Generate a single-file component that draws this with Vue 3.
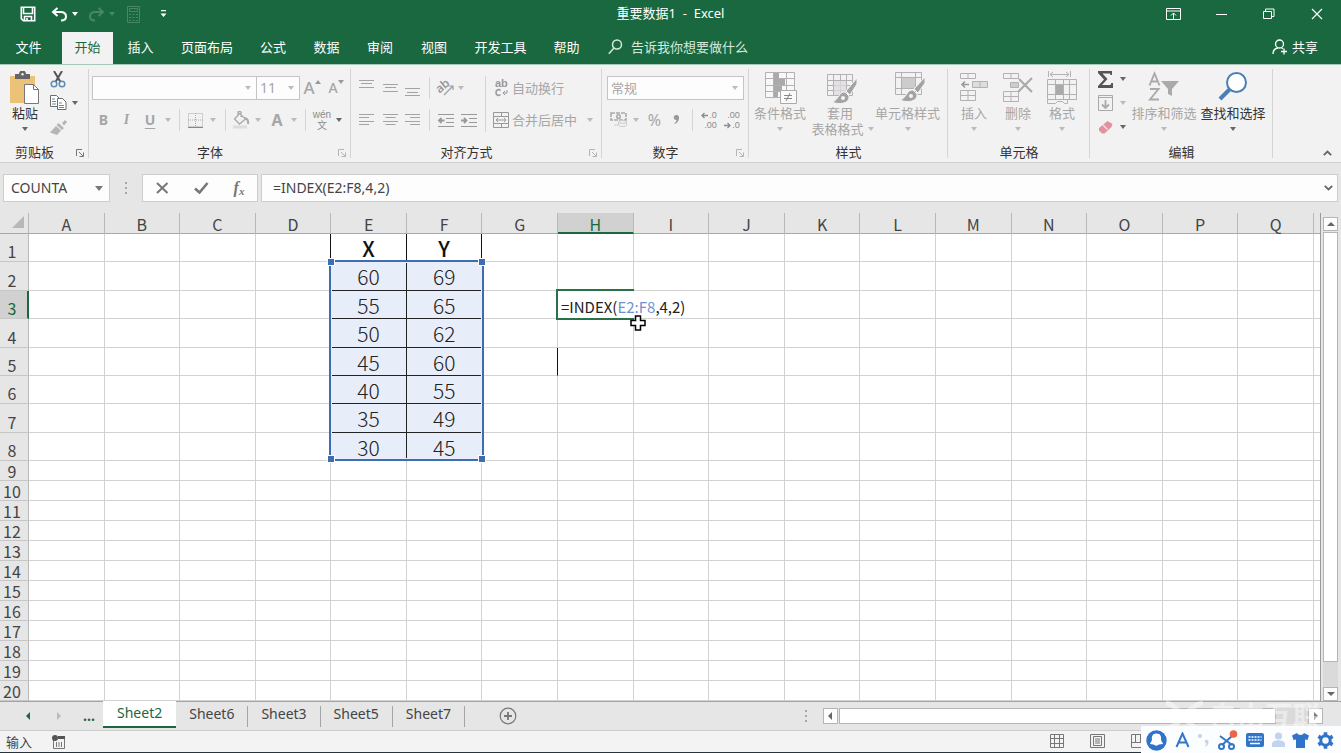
<script setup>
import { ref } from 'vue'

const tabs = ['文件', '开始', '插入', '页面布局', '公式', '数据', '审阅', '视图', '开发工具', '帮助']
const activeTab = ref('开始')

const columns = 'ABCDEFGHIJKLMNOPQ'.split('')
const values = {
  1: ['X', 'Y'], 2: [60, 69], 3: [55, 65], 4: [50, 62],
  5: [45, 60], 6: [40, 55], 7: [35, 49], 8: [30, 45],
}
const rows = Array.from({ length: 20 }, (_, i) => i + 1)
const sheets = ['Sheet2', 'Sheet6', 'Sheet3', 'Sheet5', 'Sheet7']
const activeSheet = ref('Sheet2')

const nameBox = ref('COUNTA')
const formula = ref('=INDEX(E2:F8,4,2)')
const fontName = ref('')
const fontSize = ref('11')

function rowClass(r) {
  if (r > 8) return 'short'
  return [2, 4, 7].includes(r) ? 'tall plus' : 'tall'
}
function cellText(c, r) {
  if (!values[r]) return ''
  if (c === 'E') return values[r][0]
  if (c === 'F') return values[r][1]
  return ''
}
function cellClass(c, r) {
  const data = (c === 'E' || c === 'F') && r <= 8
  return {
    title: data && r === 1,
    data: data && r > 1,
    ink: (r === 1 && c === 'D') || (r === 5 && c === 'G'),
    anchor: (c === 'E' && r === 2) || (c === 'H' && r === 3),
    editing: c === 'H' && r === 3,
  }
}
</script>

<template>
  <div class="app">
    <header class="top">
      <div class="titlebar">
        <div class="qat">
          <button aria-label="保存">
            <svg width="16" height="16" viewBox="0 0 16 16" fill="none" stroke="#fff" stroke-width="1.6"><path d="M1.3 1.3h13.4v13.4H3.4L1.300 12.700z" /><path d="M3.500 1.500v6h9v-6M4.500 14.500v-4h7v4M7 12v2.500" /></svg>
          </button>
          <button aria-label="撤消">
            <svg width="17" height="15" viewBox="0 0 17 15" fill="none" stroke="#fff" stroke-width="2"><path d="M6.500 1L2 5l4.500 4M2 5h7.500c3.500 0 5.500 2 5.500 4.500S13 13.500 10 13.500" /></svg>
          </button>
          <i class="caret light"></i>
          <button aria-label="恢复" class="dim">
            <svg width="17" height="15" viewBox="0 0 17 15" fill="none" stroke="#fff" stroke-width="2"><path d="M10.500 1L15 5l-4.500 4M15 5H7.500C4 5 2 7 2 9.500S4 13.500 7 13.500" /></svg>
          </button>
          <i class="caret light dim"></i>
          <button aria-label="计算器" class="dim">
            <svg width="13" height="17" viewBox="0 0 13 17" fill="none" stroke="#fff"><path d="M.5.5h12v16H.5zM2.500 2.500h8v3h-8zM2 8.500h2m1.500 0h2m1.500 0h2M2 11.500h2m1.500 0h2m1.500 0h2M2 14.500h2m1.500 0h2m1.500 0h2" /></svg>
          </button>
          <button aria-label="自定义">
            <svg width="7" height="8" viewBox="0 0 7 8" fill="#fff"><path d="M1 0h5v1.300H1zM.5 3.500h6L3.500 7z" /></svg>
          </button>
        </div>
        <h1>重要数据1&nbsp; -&nbsp; Excel</h1>
        <div class="window">
          <button aria-label="功能区显示选项"><svg width="15" height="13" viewBox="0 0 15 13" fill="none" stroke="#fff"><path d="M.5.5h14v11H.5zM.5 3h14M7.500 11V5M5 7.500L7.500 5 10 7.500" /></svg></button>
          <button aria-label="最小化"><svg width="11" height="13" viewBox="0 0 11 13" stroke="#fff"><path d="M0 6.500h11" /></svg></button>
          <button aria-label="还原"><svg width="12" height="12" viewBox="0 0 12 12" fill="none" stroke="#fff"><path d="M.5 3.500h8v7h-8zM2.500 3V1h8.500v7.500H9" /></svg></button>
          <button aria-label="关闭"><svg width="12" height="12" viewBox="0 0 12 12" stroke="#fff" stroke-width="1.200"><path d="M1 1l10 10M11 1L1 11" /></svg></button>
        </div>
      </div>
      <div class="tabbar">
        <nav>
          <button v-for="t in tabs" :key="t" :class="{ on: t === activeTab }" @click="activeTab = t">{{ t }}</button>
        </nav>
        <button class="tell">
          <svg width="15" height="16" viewBox="0 0 15 16" fill="none" stroke="#d5e8dc" stroke-width="1.500"><circle cx="9" cy="5.500" r="4.500" /><path d="M6 9L.8 14.800" /></svg>
          <span>告诉我你想要做什么</span>
        </button>
        <button class="share">
          <svg width="16" height="16" viewBox="0 0 16 16" fill="none" stroke="#fff" stroke-width="1.300"><circle cx="7.500" cy="5" r="4" /><path d="M1 15c0-3.500 2-5.500 5-6M9.500 9l1.500.8M12 9.500v6M9 12.500h6" /></svg>
          <span>共享</span>
        </button>
      </div>
    </header>

    <section class="ribbon">
      <div class="group clipboard">
        <div class="body big">
          <button class="large strong">
            <svg width="32" height="34" viewBox="0 0 32 34"><path d="M1 5h25v27H1z" fill="#ecc277" /><path d="M6 3h4a3.500 3.500 0 0 1 7 0h4v5H6z" fill="#666" /><circle cx="13.500" cy="3.200" r="1.200" fill="#f2f2f2" /><path d="M15.500 13.500h9l5 5v14h-14z" fill="#fff" stroke="#777" /><path d="M24.500 13.500v5h5" fill="none" stroke="#777" /></svg>
            <span>粘贴</span><i class="caret"></i>
          </button>
          <div class="stack">
            <button aria-label="剪切"><svg width="16" height="17" viewBox="0 0 16 17" fill="none"><path d="M4 0l6.500 11M12 0L5.500 11" stroke="#555" stroke-width="2" /><circle cx="4" cy="13" r="2.800" stroke="#5b8db8" stroke-width="1.500" /><circle cx="12" cy="13" r="2.800" stroke="#5b8db8" stroke-width="1.500" /></svg></button><i></i>
            <button aria-label="复制"><svg width="17" height="16" viewBox="0 0 17 16" fill="#fff" stroke="#6b6b6b"><path d="M.5.5h6l3 3v8h-9z" /><path d="M2 4h3M2 6.500h4M2 9h4" stroke="#5b8db8" /><path d="M7.500 3.500h5l3.500 3.500v7.500H7.500z" /><path d="M9 8h3M9 10.500h5M9 12.500h5" stroke="#5b8db8" /></svg></button><i class="caret"></i>
            <button aria-label="格式刷"><svg width="17" height="15" viewBox="0 0 17 15" fill="#b5b5b5"><path d="M12 3l3-3 2 2-3 3.500zM8.500 3l5.500 5-2 2L6.500 5zM6 6l5 4.500-4 4.500-7-2.500z" /></svg></button><i></i>
          </div>
        </div>
        <div class="caption launch"><span>剪贴板</span><button aria-label="剪贴板选项" class="launcher strong"><svg width="8" height="8" viewBox="0 0 8 8" fill="none" stroke="currentColor"><path d="M.5 7V.5H6M3 3l4 4M7.500 3.500v4h-4" /></svg></button></div>
      </div>

      <div class="group font">
        <div class="body lines">
          <div class="row r1">
            <label class="combo"><input v-model="fontName" aria-label="字体" /><i class="caret faint"></i></label>
            <label class="combo size"><input v-model="fontSize" aria-label="字号" /><i class="caret faint"></i></label>
            <button class="grow">A<svg width="6" height="4" viewBox="0 0 6 4"><path d="M0 4l3-4 3 4z" fill="#999" /></svg></button>
            <button class="grow less">A<svg width="6" height="4" viewBox="0 0 6 4"><path d="M0 0l3 4 3-4z" fill="#999" /></svg></button>
          </div>
          <div class="row r2">
            <button class="bold">B</button><button class="italic">I</button><button class="under">U</button><i class="caret faint"></i><i class="sep"></i>
            <button aria-label="边框"><svg width="15" height="15" viewBox="0 0 15 15" fill="none" stroke="#aaa"><path d="M.5.5h14v13H.5zM7.500 0v14M0 7h15" stroke-dasharray="1 1" /><path d="M0 14.500h15" stroke="#888" /></svg></button><i class="caret faint"></i><i class="sep"></i>
            <button aria-label="填充颜色"><svg width="17" height="18" viewBox="0 0 17 18" fill="none" stroke="#aaa" stroke-width="1.300"><path d="M6.500 2.500l6 5.500-6 5L1.500 8zM5 5V1.500C5 0 8 0 8 1.500V6" /><path d="M12 7c3 1 3.500 3 3 6" stroke-width="2" /><path d="M0 16h14" stroke="#ddd" stroke-width="3" /></svg></button><i class="caret faint"></i>
            <button class="bold color">A</button><i class="caret faint"></i><i class="sep"></i>
            <button class="pinyin"><span>wén</span><span>文</span></button><i class="caret"></i>
          </div>
        </div>
        <div class="caption launch"><span>字体</span><button aria-label="字体选项" class="launcher"><svg width="8" height="8" viewBox="0 0 8 8" fill="none" stroke="currentColor"><path d="M.5 7V.5H6M3 3l4 4M7.500 3.500v4h-4" /></svg></button></div>
      </div>

      <div class="group align">
        <div class="body split">
          <div class="lines">
            <div class="row a1">
              <button aria-label="顶端对齐"><svg width="16" height="20" viewBox="0 0 16 20" stroke="#a3a3a3"><path d="M0 2.500h15M2 5.500h11M0 9.500h15" /></svg></button>
              <button aria-label="垂直居中"><svg width="16" height="20" viewBox="0 0 16 20" stroke="#a3a3a3"><path d="M0 6.500h15M2 9.500h11M0 13.500h15" /></svg></button>
              <button aria-label="底端对齐"><svg width="16" height="20" viewBox="0 0 16 20" stroke="#a3a3a3"><path d="M0 10.500h15M2 14.500h11M0 17.500h15" /></svg></button>
              <i class="sep"></i>
              <button aria-label="方向"><svg class="loose" width="18" height="16" viewBox="0 0 18 16" fill="none" stroke="#9c9c9c"><text x="0" y="11" font-size="12" font-weight="600" font-family="Noto Sans" fill="#999" stroke="none" transform="rotate(-40 5 9)">ab</text><path d="M7 15l9-9M12 6h4v4" stroke-width="1.200" /></svg></button>
              <i class="caret faint start"></i>
            </div>
            <div class="row a1">
              <button aria-label="左对齐"><svg width="16" height="14" viewBox="0 0 16 14" stroke="#a3a3a3"><path d="M0 1.500h15M0 4.500h10M0 8.500h15M0 11.500h10" /></svg></button>
              <button aria-label="居中"><svg width="16" height="14" viewBox="0 0 16 14" stroke="#a3a3a3"><path d="M0 1.500h15M2.500 4.500h10M0 8.500h15M2.500 11.500h10" /></svg></button>
              <button aria-label="右对齐"><svg width="16" height="14" viewBox="0 0 16 14" stroke="#a3a3a3"><path d="M0 1.500h15M5 4.500h10M0 8.500h15M5 11.500h10" /></svg></button>
              <i class="sep"></i>
              <button aria-label="减少缩进"><svg width="18" height="15" viewBox="0 0 18 15" stroke="#999" fill="none"><path d="M1 1.500h16M9 5.500h8M9 9.500h8M1 13.500h16" /><path d="M7.500 7.500H2M4.500 5L2 7.500 4.500 10" stroke-width="1.800" /></svg></button>
              <button aria-label="增加缩进"><svg width="18" height="15" viewBox="0 0 18 15" stroke="#999" fill="none"><path d="M1 1.500h16M9 5.500h8M9 9.500h8M1 13.500h16" /><path d="M1 7.500h5.500M4 5l2.500 2.500L4 10" stroke-width="1.800" /></svg></button>
            </div>
          </div>
          <i class="sep full"></i>
          <div class="lines wide">
            <button class="text"><svg class="loose" width="18" height="18" viewBox="0 0 18 18" fill="none" stroke="#999"><text x="3" y="8" font-size="11" font-weight="700" font-family="Liberation Sans" fill="#999" stroke="none">ab</text><path d="M8.500 11.500c-1.500-1.500-4.500-1-4.500 2s3 3.500 4.500 2" stroke-width="1.600" /><path d="M15 11v3h-4M13 12l-2 2 2 2" /></svg><span>自动换行</span></button>
            <button class="text"><svg width="18" height="17" viewBox="0 0 18 17" fill="none" stroke="#999"><path d="M1.500.500h15v15h-15zM1.500 4.500h15M1.500 11.500h15M9.500 0v4M9.500 12v4M4 8h10M6 6L4 8l2 2M12 6l2 2-2 2" /></svg><span>合并后居中</span><i class="caret faint"></i></button>
          </div>
        </div>
        <div class="caption launch"><span>对齐方式</span><button aria-label="对齐选项" class="launcher"><svg width="8" height="8" viewBox="0 0 8 8" fill="none" stroke="currentColor"><path d="M.5 7V.5H6M3 3l4 4M7.500 3.500v4h-4" /></svg></button></div>
      </div>

      <div class="group number">
        <div class="body lines">
          <label class="combo format"><select aria-label="数字格式"><option>常规</option></select><i class="caret faint"></i></label>
          <div class="row n2">
            <button aria-label="会计数字格式"><svg width="18" height="16" viewBox="0 0 18 16" fill="none" stroke="#aaa"><path d="M1 1h15v7H1z" stroke-width="1.600" stroke-dasharray="4 1" /><circle cx="8.500" cy="4.500" r="1.800" stroke-width="1.500" /><ellipse cx="12.500" cy="10" rx="4" ry="1.500" fill="#eee" stroke="#ccc" /><path d="M8.500 10v3c0 2 8 2 8 0v-3M4 13h4" stroke="#ccc" /></svg></button><i class="caret faint"></i>
            <button class="percent">%</button><button class="comma" aria-label="千位分隔"><svg width="7" height="10" viewBox="0 0 7 10" fill="#999"><path d="M3 0a2.500 2.500 0 0 1 3 3c0 3-2 5-4 6l-.5-1C3 7 3.500 6 3.500 5A2.500 2.500 0 0 1 3 0z" /></svg></button><i class="sep"></i>
            <button class="dec"><span><svg width="7" height="7" viewBox="0 0 7 7" fill="none" stroke="#8c8c8c" stroke-width="1.300"><path d="M7 3.500H1M3.500 1L1 3.500 3.500 6" /></svg>.0</span><span>.00</span></button>
            <button class="dec"><span>.00</span><span><svg width="7" height="7" viewBox="0 0 7 7" fill="none" stroke="#8c8c8c" stroke-width="1.300"><path d="M0 3.500h6M3.500 1L6 3.500 3.500 6" /></svg>.0</span></button>
          </div>
        </div>
        <div class="caption launch"><span>数字</span><button aria-label="数字选项" class="launcher"><svg width="8" height="8" viewBox="0 0 8 8" fill="none" stroke="currentColor"><path d="M.5 7V.5H6M3 3l4 4M7.500 3.500v4h-4" /></svg></button></div>
      </div>

      <div class="group styles">
        <div class="body big">
          <button class="large">
            <svg width="34" height="34" viewBox="0 0 34 34" fill="none" stroke="#b5b0b5"><path d="M2.500 1.500h29v25h-29zM2.500 7.500h29M2.500 14.500h29M2.500 20.500h29M10.500 1v25M23.500 1v25" fill="#f8f8f8" /><path d="M11 2h5v6h-5zM11 8h11v6H11zM11 15h8v5h-8zM11 21h4v5h-4z" fill="#aaa" stroke="none" /><path d="M17.500 19.500h16v13h-16z" fill="#fafafa" stroke="#aaa" /><path d="M21 24.500h8M21 27.500h8M27 22l-4 8" stroke="#888" /></svg>
            <span>条件格式</span><i class="caret faint"></i>
          </button>
          <button class="large">
            <svg width="34" height="34" viewBox="0 0 34 34" fill="none" stroke="#b5b0b5"><path d="M4.500 3.500h25v21h-25zM4.500 9.500h25M4.500 14.500h25M4.500 19.500h25M10.500 3v21M17.500 3v21M23.500 3v21" /><path d="M11 10h12v14H11z" fill="#ddd" fill-opacity=".8" stroke="none" /><path d="M34 7L23 20l4 4 7-11z" fill="#a3a3a3" stroke="#f4f4f4" /><path d="M22 21c-6-1-6 8-13 10 7 3 18 2 17-6z" fill="#a3a3a3" stroke="#f4f4f4" /><circle cx="20" cy="27" r="2" fill="#f4f4f4" stroke="none" /></svg>
            <span>套用</span><span class="second">表格格式<i class="caret faint"></i></span>
          </button>
          <button class="large wide">
            <svg width="34" height="34" viewBox="0 0 34 34" fill="none" stroke="#b5b0b5"><path d="M4.500 1.500h26v22h-26zM4.500 6.500h26M4.500 17.500h26M10.500 1v22M24.500 1v22" /><path d="M11 7h13v10H11z" fill="#ccc" stroke="none" /><path d="M34 6L23 18l4 4 7-10z" fill="#a3a3a3" stroke="#f4f4f4" /><path d="M22 19c-6-1-6 8-13 10 7 3 18 2 17-6z" fill="#a3a3a3" stroke="#f4f4f4" /><circle cx="20" cy="25" r="2" fill="#f4f4f4" stroke="none" /></svg>
            <span>单元格样式</span><i class="caret faint"></i>
          </button>
        </div>
        <div class="caption"><span>样式</span></div>
      </div>

      <div class="group cells">
        <div class="body big">
          <button class="large">
            <svg width="30" height="34" viewBox="0 0 30 34" fill="none" stroke="#b5b0b5"><path d="M1.500 2.500h15v5h-15zM9 2v5M1.500 19.500h15v10h-15zM9 19v10M1.500 24.500h15" /><path d="M13.500 10.500h15v6h-15zM21 10v6" fill="#ddd" /><path d="M10 13.500H3M6 10.500l-3 3 3 3" stroke="#999" stroke-width="1.600" /></svg>
            <span>插入</span><i class="caret faint"></i>
          </button>
          <button class="large">
            <svg width="32" height="34" viewBox="0 0 32 34" fill="none" stroke="#b5b0b5"><path d="M1.500 2.500h15v5h-15zM9 2v5M1.500 20.500h15v10h-15zM9 20v10M1.500 25.500h15" /><path d="M8.500 11.500h8v5h-8z" fill="#ccc" /><path d="M17 8l13 13M30 7L16 21" stroke="#aaa" stroke-width="2.200" /></svg>
            <span>删除</span><i class="caret faint"></i>
          </button>
          <button class="large">
            <svg width="30" height="34" viewBox="0 0 30 34" fill="none" stroke="#b5b0b5"><path d="M1.500 0v6M23.500 0v6M3 3.500h19M6 1L3 3.500 6 6M19 1l3 2.500L19 6M.5 8.500h29v20H.5zM.5 13.500h29M.5 23.500h29M8.500 8v20M16.500 8v20M22.500 8v20" /><path d="M9 14h7v10H9z" fill="#aaa" stroke="none" /><path d="M.5 28.500v4h8l2-2h5l2 2h3v-4" /></svg>
            <span>格式</span><i class="caret faint"></i>
          </button>
        </div>
        <div class="caption"><span>单元格</span></div>
      </div>

      <div class="group edit">
        <div class="body big">
          <div class="stack">
            <button aria-label="自动求和"><svg width="17" height="17" viewBox="0 0 17 17" fill="#555"><path d="M1 0h14v4h-1.500L13 2.500H5.500L10.500 8 5 14h8.500l.8-2H16v5H1v-2l6-6.500L1 2z" /></svg></button><i class="caret"></i>
            <button aria-label="填充"><svg width="16" height="17" viewBox="0 0 16 17" fill="none" stroke="#aaa"><path d="M.5.500h14v15H.5zM0 2.500h15" /><path d="M7.500 5v8M4 9.500L7.500 13 11 9.500" stroke-width="1.800" /></svg></button><i class="caret faint"></i>
            <button aria-label="清除"><svg width="14" height="14" viewBox="0 0 14 14"><path d="M8.500 1l5 3-1 3-7 6.500H3l-3-3V8z" fill="#e590a0" /><path d="M4 5l4.500 4.500" stroke="#f8e4e8" stroke-width="1.200" /></svg></button><i class="caret"></i>
          </div>
          <button class="large sort">
            <svg width="32" height="34" viewBox="0 0 32 34" fill="none" stroke="#aaa" stroke-width="1.900"><path d="M1.500 14.500L6.500 2.500l5 12M3.200 10.500h6.600M2 18h8.500L2 28.500h9" /><path d="M13 10h18l-7 8v7l-4-2v-5z" fill="#aaa" stroke="none" /></svg>
            <span>排序和筛选</span><i class="caret faint"></i>
          </button>
          <button class="large find strong">
            <svg width="32" height="34" viewBox="0 0 32 34" fill="none" stroke="#4a7fb5"><circle cx="19.500" cy="11.500" r="9.500" fill="#fff" stroke-width="2" /><path d="M12.500 18.500L3 28" stroke-width="4" /></svg>
            <span>查找和选择</span><i class="caret"></i>
          </button>
        </div>
        <div class="caption"><span>编辑</span></div>
      </div>
      <button class="collapse" aria-label="折叠功能区"><svg width="9" height="6" viewBox="0 0 9 6" fill="none" stroke="#666" stroke-width="1.800"><path d="M.8 5.200L4.500 1.500l3.700 3.700" /></svg></button>
    </section>

    <section class="formulabar">
      <label class="box name"><input v-model="nameBox" aria-label="名称框" /><i class="caret down"></i></label>
      <svg class="grip" width="3" height="12" viewBox="0 0 3 12" fill="#aaa"><path d="M0 0h2v2H0zM0 5h2v2H0zM0 10h2v2H0z" /></svg>
      <div class="box actions">
        <button aria-label="取消"><svg width="13" height="12" viewBox="0 0 13 12" fill="none" stroke="#777" stroke-width="2"><path d="M1 1l10.500 10M11.500 1L1 11" /></svg></button>
        <button aria-label="输入"><svg width="15" height="12" viewBox="0 0 15 12" fill="none" stroke="#777" stroke-width="2.600"><path d="M1 6.500l4.500 4L13.500 1" /></svg></button>
        <button class="fx" aria-label="插入函数">f<sub>x</sub></button>
      </div>
      <label class="box formula"><input v-model="formula" aria-label="编辑栏" /><svg width="9" height="6" viewBox="0 0 9 6" fill="none" stroke="#666" stroke-width="1.800"><path d="M.8.8l3.700 3.700L8.200.8" /></svg></label>
    </section>

    <main class="work">
      <table>
        <colgroup><col class="c-head" /><col v-for="c in columns" :key="c" /><col class="c-rest" /></colgroup>
        <thead>
          <tr>
            <th class="corner"><svg width="12" height="12" viewBox="0 0 12 12"><path d="M12 0v12H0z" fill="#b8b8b8" /></svg></th>
            <th v-for="c in columns" :key="c" :class="{ hot: c === 'H' }">{{ c }}</th>
            <th></th>
          </tr>
        </thead>
        <tbody>
          <tr v-for="r in rows" :key="r" :class="rowClass(r)">
            <th :class="{ hot: r === 3 }">{{ r }}</th>
            <td v-for="c in columns" :key="c" :class="cellClass(c, r)">
              <template v-if="c === 'H' && r === 3">
                <div class="editor">=INDEX(<span>E2:F8</span>,4,2)</div>
                <svg class="pointer" width="16" height="16" viewBox="0 0 16 16"><path d="M5.500 1h5v4.500H15v5h-4.500V15h-5v-4.500H1v-5h4.500z" fill="#fff" stroke="#000" stroke-width="1.500" /></svg>
              </template>
              <template v-else>{{ cellText(c, r) }}</template>
              <div v-if="c === 'E' && r === 2" class="range"><i></i><i></i><i></i><i></i></div>
            </td>
            <td></td>
          </tr>
        </tbody>
      </table>
      <div class="vscroll">
        <button aria-label="向上"><i class="tri up"></i></button>
        <div class="thumb"></div>
        <div class="track"></div>
        <button aria-label="向下"><i class="tri dn"></i></button>
      </div>
    </main>

    <section class="sheets">
      <div class="navs">
        <button aria-label="上一张"><i class="tri lt green"></i></button>
        <button aria-label="下一张"><i class="tri rt pale"></i></button>
        <button class="more">...</button>
      </div>
      <div class="list">
        <button v-for="s in sheets" :key="s" :class="{ on: s === activeSheet }" @click="activeSheet = s">{{ s }}</button>
      </div>
      <button class="add" aria-label="新工作表"><svg width="18" height="18" viewBox="0 0 18 18" fill="none" stroke="#777"><circle cx="9" cy="9" r="7.800" stroke-width="1.200" /><path d="M9 5v8M5 9h8" stroke-width="1.800" /></svg></button>
      <div class="hscroll">
        <svg width="3" height="12" viewBox="0 0 3 12" fill="#aaa"><path d="M0 0h2v2H0zM0 5h2v2H0zM0 10h2v2H0z" /></svg>
        <div class="hbar">
          <button aria-label="向左"><i class="tri lt"></i></button>
          <div class="thumb"></div>
          <div class="track"></div>
          <button aria-label="向右"><i class="tri rt"></i></button>
        </div>
      </div>
      <div class="mark">
        <svg width="44" height="32" viewBox="0 0 44 32" fill="none" stroke="#fff" stroke-width="5"><path d="M3 3c12 0 22 26 34 26M40 3C26 4 16 28 3 29" /></svg>
        <span>自由互联</span>
      </div>
    </section>

    <footer class="status">
      <span>输入</span>
      <svg width="14" height="14" viewBox="0 0 14 14" fill="none" stroke="#777"><path d="M1.500 5v8.500h11v-11H6M4.500 7v5M7 7v5M9.500 7v5" /><path d="M6 2.500h7" stroke-width="3" stroke="#555" /><circle cx="3" cy="3" r="3" fill="#555" stroke="none" /></svg>
      <div class="views">
        <button aria-label="普通"><svg width="15" height="15" viewBox="0 0 15 15" fill="none" stroke="#777"><path d="M.5.500h13v13H.5zM.5 4.500h13M.5 9.500h13M4.500.500v13M9.500.500v13" /></svg></button>
        <button aria-label="页面布局"><svg width="16" height="15" viewBox="0 0 16 15" fill="none" stroke="#777"><path d="M.5.500h14v13H.5zM3.500 2.500h8v9h-8zM5 5h5M5 7h5M5 9h5" /></svg></button>
        <button aria-label="分页预览"><svg width="15" height="15" viewBox="0 0 15 15" fill="none" stroke="#777"><path d="M.5.500h13v13H.5zM4.500.500v8h5v-8M.5 8.500h13" /></svg></button>
      </div>
    </footer>

    <aside class="ime">
      <svg width="21" height="21" viewBox="0 0 21 21"><circle cx="10.500" cy="10.500" r="10.200" fill="#2f74c8" /><path d="M10.500 3.500c4 0 5 3 4.500 6 0 2 2 3 2 4.500l-4 .5c-1.500 1.500-4 1.500-5.500 0l-3.500-.5c0-1.500 2-2.500 2-4.500-.5-3 .5-6 4.500-6z" fill="#fff" /></svg>
      <svg width="15" height="16" viewBox="0 0 15 16" fill="none" stroke="#3277c8" stroke-width="2"><path d="M1.500 15L7.500 1.500 13.500 15M4 10.500h7" /></svg>
      <svg width="13" height="14" viewBox="0 0 13 14" fill="#c3d3ee"><circle cx="3" cy="3" r="2" /><path d="M8.500 7a2 2 0 0 1 3 2c0 2-1 3.500-3 4.500l-.5-1c1-.6 1.500-1.200 1.500-2A2 2 0 0 1 8.500 7z" /></svg>
      <svg width="20" height="21" viewBox="0 0 20 21" fill="none" stroke="#3277c8" stroke-width="2"><path d="M2 6l12 9M14 6L4 15" /><circle cx="3.500" cy="16.500" r="2.500" /><circle cx="13.500" cy="16.500" r="2.500" /><circle cx="15.500" cy="4" r="3.800" fill="#ec6549" stroke="none" /></svg>
      <svg width="18" height="14" viewBox="0 0 18 14"><rect width="18" height="14" rx="2" fill="#2f74c8" /><path d="M2.500 4h13M2.500 7h13" stroke="#fff" stroke-width="1.500" stroke-dasharray="2 1" /><path d="M4 10.500h10" stroke="#fff" stroke-width="1.500" /></svg>
      <svg width="13" height="16" viewBox="0 0 13 16" fill="#c3d3ee"><circle cx="6.500" cy="4" r="3.600" /><path d="M0 15v-3c0-5 13-5 13 0v3z" /></svg>
      <svg width="17" height="15" viewBox="0 0 17 15" fill="#2f74c8"><path d="M5 0c1 2.500 6 2.500 7 0l5 2.500-1.500 4.500-2.500-.5V15H4V6.500L1.500 7 0 2.500z" /></svg>
      <svg width="17" height="17" viewBox="0 0 17 17" fill="none" stroke="#2f74c8"><circle cx="8.500" cy="8.500" r="4.700" stroke-width="3" /><path d="M8.500.3v3M8.500 13.700v3M1.400 4.400L4 5.900M13 11.100l2.600 1.500M1.400 12.600L4 11.100M13 5.900l2.600-1.500" stroke-width="3.600" /></svg>
    </aside>
  </div>
</template>

<style>
body { margin: 0; }
</style>

<style scoped>
* { box-sizing: border-box; }
.app {
  position: relative;
  display: flex;
  flex-direction: column;
  min-height: 100vh;
  overflow: hidden;
  background: #e6e6e6;
  color: #444;
  font: 13px/16px "Noto Sans", "Noto Sans CJK SC", sans-serif;
}
button { border: 0; padding: 0; background: none; font: inherit; color: inherit; display: flex; align-items: center; justify-content: center; white-space: nowrap; }
input, select { border: 0; padding: 0; margin: 0; background: none; font: inherit; color: inherit; outline: 0; min-width: 0; appearance: none; flex: 1; }
svg { display: block; flex: none; }
.loose { overflow: visible; }
.caret { display: block; flex: none; width: 0; height: 0; border: 3px solid transparent; border-top: 4px solid #666; border-bottom: 0; }
.caret.light { border-top-color: #fff; }
.caret.faint { border-top-color: #bbb; }
.caret.down { border-width: 4px; border-top-width: 5px; border-bottom: 0; border-top-color: #777; }
.dim { opacity: .2; }

.top { background: #1a6840; color: #fff; }
.titlebar { display: grid; grid-template-columns: 1fr auto 1fr; height: 28px; align-items: center; }
h1 { margin: 0; font-size: 13px; font-weight: 400; line-height: 18px; padding-bottom: 2px; }
.qat { display: flex; align-items: center; padding-left: 20px; }
.qat button:nth-child(2) { margin-left: 15px; }
.qat .caret { margin-left: 4px; }
.qat button:nth-child(4) { margin-left: 10px; }
.qat button:nth-child(6) { margin-left: 12px; }
.qat button:nth-child(7) { margin-left: 20px; }
.window { display: flex; justify-content: flex-end; }
.window button { width: 48px; height: 26px; }
.tabbar { display: flex; align-items: stretch; height: 36px; padding-top: 4px; }
.tabbar button { padding-bottom: 2px; }
nav { display: grid; grid-template-columns: 62px 51px 55px 78px 54px 53px 54px 54px 79px 53px; }
nav button:first-child { padding-right: 5px; }
nav .on { background: #f3f2f2; color: #1a6840; }
.tell { gap: 8px; margin-left: 15px; color: #d5e8dc; }
.tabbar .share { gap: 4px; margin-left: auto; padding-right: 23px; }

.ribbon { display: flex; height: 99px; border-top: 1px solid #a9c9b8; border-bottom: 1px solid #cfcfcf; background: #f3f2f2; color: #a6a6a6; }
.group { display: flex; flex-direction: column; flex: none; position: relative; }
.group::after { content: ""; position: absolute; right: 0; top: 4px; bottom: 4px; width: 1px; background: #d5d5d5; }
.clipboard { width: 89px; }
.font { width: 262px; }
.align { width: 251px; }
.number { width: 147px; }
.styles { width: 199px; }
.cells { width: 142px; }
.edit { width: 183px; }
.body { flex: 1; }
.caption { display: flex; height: 21px; align-items: center; justify-content: center; color: #333; position: relative; }
.caption.launch { padding-right: 20px; }
.launcher { position: absolute; right: 5px; bottom: 5px; color: #b5b5b5; }
.launcher.strong { color: #777; }
.lines { display: flex; flex-direction: column; gap: 8px; }
.body.lines, .body.split { padding-top: 11px; }
.font .body { padding-left: 3px; }
.number .body { padding-left: 5px; padding-right: 5px; }
.row { display: grid; height: 24px; align-items: center; justify-items: center; }
.r1 { grid-template-columns: 165px 43px 24px 24px; }
.r2 { grid-template-columns: 23px 23px 24px 12px 10px 22px 14px 10px 22px 12px 26px 8px 14px 20px 14px; }
.a1 { grid-template-columns: 24px 23px 22px 10px 24px 22px; }
.n2 { grid-template-columns: 23px 12px 25px 19px 12px 22px 24px; }
.sep { width: 1px; height: 22px; background: #d5d5d5; }
.sep.full { height: 56px; margin-left: 5px; }
.combo { display: flex; align-items: center; width: 100%; height: 24px; padding: 0 5px 0 3px; border: 1px solid #c4c4c4; background: #fdfdfd; }
.combo input, .combo select { width: 100%; }
.combo.size { border-left: 0; font-size: 14px; }
.grow { font-size: 17px; align-items: flex-start; font-weight: 500; }
.less { font-size: 14px; }
.bold { font-weight: 700; font-size: 14px; }
.color { font-size: 16px; }
.italic { font: italic 700 14px/16px "Liberation Serif", serif; }
.under { font-weight: 700; font-size: 14px; text-decoration: underline; text-underline-offset: 3px; }
.pinyin { flex-direction: column; font: 10px/11px "Liberation Sans", "Noto Sans CJK SC", sans-serif; color: #8c8c8c; }
.start { justify-self: start; }
.split { display: flex; padding-left: 4px; }
.wide.lines { padding-left: 6px; }
.text { height: 24px; justify-content: flex-start; gap: 2px; }
.text .caret { margin-left: 8px; }
.percent { font-size: 16px; }
.dec { flex-direction: column; font: 9px/10px "Liberation Sans", sans-serif; align-items: flex-end; color: #8c8c8c; }
.dec span { display: flex; align-items: center; gap: 1px; }
.big { display: flex; padding-top: 6px; }
.large { flex-direction: column; justify-content: flex-start; align-self: flex-start; }
.large > span { height: 16px; line-height: 16px; }
.large > .caret { margin-top: 6px; }
.large.strong { color: #333; }
.second { display: flex; align-items: center; gap: 4px; padding-left: 5px; }
.clipboard .body { padding-left: 4px; }
.clipboard .large { width: 42px; }
.stack { display: grid; grid-template-rows: 24px 24px 24px; align-items: center; justify-items: center; margin-top: -4px; }
.clipboard .stack { grid-template-columns: 24px 10px; }
.styles .body { padding-left: 1px; }
.styles .large { width: 60px; }
.styles .large.wide { width: 75px; }
.cells .body { padding-left: 4px; }
.cells .large { width: 44px; }
.edit .body { padding-left: 4px; }
.edit .stack { grid-template-columns: 23px 11px; }
.edit .sort { width: 72px; }
.edit .find { width: 66px; }
.collapse { margin-left: auto; align-self: flex-end; padding: 0 9px 6px; }

.formulabar { display: flex; align-items: center; height: 50px; padding: 0 3px; color: #444; font-size: 14px; }
.box { display: flex; align-items: center; height: 28px; border: 1px solid #cdcdcd; background: #fdfdfd; }
.name { width: 107px; padding: 0 6px 0 7px; }
.grip { margin: 0 14px 0 15px; }
.actions { width: 116px; justify-content: space-around; padding: 0; }
.fx { font: italic 700 16px/16px "Liberation Serif", serif; color: #777; }
.fx sub { font-size: 11px; line-height: 8px; padding-top: 6px; }
.formula { flex: 1; margin-left: 3px; padding: 0 4px 0 11px; }

.work { display: flex; border-bottom: 1px solid #a5a5a5; }
table { flex: 1; width: 100%; min-width: 0; table-layout: fixed; border-collapse: separate; border-spacing: 0; font-family: "Noto Sans CJK SC", sans-serif; border-right: 1px solid #999; }
.c-head { width: 29px; }
.c-rest { width: 6px; }
th, td { padding: 0; overflow: visible; white-space: nowrap; border: 0 solid #d2d2d2; border-right-width: 1px; border-bottom-width: 1px; }
td { background: #fff; text-align: center; font-size: 21px; font-weight: 300; line-height: 24px; color: #222; }
th { background: #e6e6e6; font-size: 16px; font-weight: 400; line-height: 18px; border-right-color: #b9b9b9; vertical-align: bottom; }
thead th { height: 21px; border-bottom-color: #a8a8a8; line-height: 16px; padding-bottom: 1px; }
thead th:last-child { border-right: 0; }
td:last-child { border-right: 0; }
.corner svg { margin: 0 4px 4px auto; }
tbody th { padding-right: 4px; border-bottom-color: #c6c6c6; }
.tall { height: 28px; }
.tall.plus { height: 29px; }
.tall th { padding-bottom: 1px; }
.short { height: 20px; }
.short td { line-height: 18px; }
.hot { background: #d1d1d1; color: #1a6840; }
thead .hot { border-bottom: 2px solid #1a6840; padding-bottom: 0; }
tbody .hot { border-right: 2px solid #1a6840; padding-right: 3px; }
.title { color: #111; font-weight: 500; border-right-color: #111; }
.data { background: #e8eef9; border-color: #222; }
.ink { border-right-color: #111; }
.anchor { position: relative; }
.range { position: absolute; z-index: 1; left: -2px; top: -2px; width: calc(200% + 6px); height: 201px; border: 2px solid #3f6db2; box-shadow: inset 0 0 0 1px #e8eef9; }
.range i { position: absolute; width: 6px; height: 6px; background: #3f6db2; outline: 1px solid #fff; }
.range i:nth-child(1) { left: -3px; top: -3px; }
.range i:nth-child(2) { right: -3px; top: -3px; }
.range i:nth-child(3) { left: -3px; bottom: -3px; }
.range i:nth-child(4) { right: -3px; bottom: -3px; }
.editing { border-right-color: #fff; }
.editor { position: absolute; z-index: 1; left: -2px; right: -1px; top: -2px; bottom: -2px; border: 2px solid #2a7049; border-right: 0; padding: 4px 0 0 3px; text-align: left; font-size: 15px; font-weight: 400; line-height: 24px; }
.editor span { color: #6f93cf; }
.pointer { position: absolute; z-index: 2; right: -13px; bottom: -13px; }

.vscroll { display: flex; flex-direction: column; flex: none; width: 20px; padding: 4px 3px 0 2px; }
.vscroll button, .hbar button { flex: none; width: 15px; height: 14px; border: 1px solid #b5b5b5; background: #fdfdfd; }
.vscroll .thumb { flex: 430; margin-top: 1px; border: 1px solid #b5b5b5; background: #fff; }
.vscroll .track { flex: 25; background: #dadada; }
.tri { display: block; width: 0; height: 0; border: 4px solid transparent; }
.tri.up { border-top: 0; border-bottom-color: #666; }
.tri.dn { border-bottom: 0; border-top-color: #666; }
.tri.lt { border-left: 0; border-right-color: #666; }
.tri.rt { border-right: 0; border-left-color: #777; }
.tri.green { border-right-color: #1a6840; }
.tri.pale { border-left-color: #bbb; }

.sheets { position: relative; display: flex; height: 29px; border-bottom: 1px solid #cdcdcd; font-size: 14px; line-height: 18px; }
.navs { display: grid; grid-template-columns: 28px 34px 26px; width: 103px; padding-left: 14px; flex: none; }
.more { color: #1a6840; font-weight: 700; }
.list { display: flex; }
.list button { height: 25px; padding: 0 14px 2px 13px; position: relative; }
.list button:not(.on)::after { content: ""; position: absolute; right: 0; top: 4px; bottom: 0; width: 1px; background: #a5a5a5; }
.list .on { padding-left: 14px; background: #fff; color: #1a6840; border-bottom: 2px solid #1a6840; margin-top: -1px; height: 27px; }
.add { margin-left: 34px; }
.hscroll { display: flex; align-items: center; flex: none; width: 40%; margin-left: auto; padding-right: 18px; gap: 15px; }
.hbar { display: flex; flex: 1; height: 16px; }
.hbar button { height: 16px; }
.hbar .thumb { flex: 437; margin-left: 1px; border: 1px solid #b5b5b5; background: #fff; }
.hbar .track { flex: 32; background: #dadada; }
.mark { position: absolute; right: 20px; top: -2px; height: 32px; display: flex; align-items: center; gap: 2px; color: #fff; opacity: .45; font-size: 28px; font-weight: 700; pointer-events: none; }

.status { display: flex; align-items: center; flex: 1; min-height: 23px; padding-left: 6px; gap: 20px; background: #f3f3f3; border-bottom: 2px solid #26323c; font-size: 13px; }
.views { display: flex; gap: 25px; margin-left: auto; padding-right: 195px; }
.ime { position: absolute; right: 0; bottom: 0; display: flex; align-items: center; justify-content: space-between; width: 200px; height: 28px; padding: 0 7px 0 5px; background: #fbfdff; }
</style>
